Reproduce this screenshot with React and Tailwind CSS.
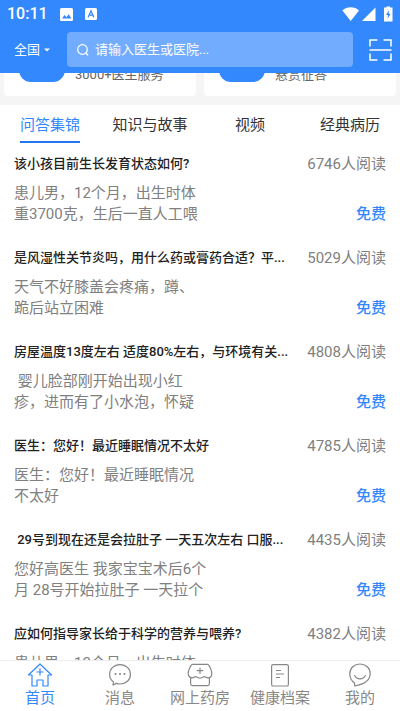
import { useState } from 'react'

const tabs = ['问答集锦', '知识与故事', '视频', '经典病历']

const services = [
  { id: 'doctor', label: '3000+医生服务' },
  { id: 'reward', label: '悬赏征答' },
]

const articles = [
  { id: 1, title: '该小孩目前生长发育状态如何?', reads: 6746, body: '患儿男，12个月，出生时体\n重3700克，生后一直人工喂' },
  { id: 2, title: '是风湿性关节炎吗，用什么药或膏药合适？平...', reads: 5029, body: '天气不好膝盖会疼痛，蹲、\n跪后站立困难' },
  { id: 3, title: '房屋温度13度左右 适度80%左右，与环境有关...', reads: 4808, body: ' 婴儿脸部刚开始出现小红\n疹，进而有了小水泡，怀疑' },
  { id: 4, title: '医生：您好！最近睡眠情况不太好', reads: 4785, body: '医生：您好！最近睡眠情况\n不太好' },
  { id: 5, title: ' 29号到现在还是会拉肚子 一天五次左右 口服...', reads: 4435, body: '您好高医生 我家宝宝术后6个\n月 28号开始拉肚子 一天拉个' },
  { id: 6, title: '应如何指导家长给于科学的营养与喂养?', reads: 4382, body: '患儿男，12个月，出生时体' },
]

function HomeIcon() {
  return (
    <svg width="26" height="24" viewBox="0 0 26 24" fill="none" stroke="currentColor" strokeWidth="1.2" strokeLinejoin="round">
      <path d="M13 1 L24.5 12 H21 V23 H16 V17 H10 V23 H5 V12 H1.5 Z" />
      <path d="M13 5.5 V12.5 M9.5 9 H16.5" />
    </svg>
  )
}

function MessageIcon() {
  return (
    <svg width="26" height="24" viewBox="0 0 26 24" fill="none" stroke="currentColor" strokeWidth="1.2" strokeLinejoin="round">
      <path d="M6.5 19 C3.8 17.2 2.6 14.5 2.6 11.6 C2.6 5.8 7 1.6 13 1.6 C19 1.6 23.4 5.8 23.4 11.4 C23.4 17 19 21 13 21 C11.6 21 10.4 20.8 9.3 20.4 L6 22 Z" />
      <g fill="currentColor" stroke="none">
        <circle cx="8.5" cy="11" r="1.1" />
        <circle cx="13" cy="11" r="1.1" />
        <circle cx="17.5" cy="11" r="1.1" />
      </g>
    </svg>
  )
}

function ShopIcon() {
  return (
    <svg width="26" height="24" viewBox="0 0 26 24" fill="none" stroke="currentColor" strokeWidth="1.2" strokeLinecap="round" strokeLinejoin="round">
      <path d="M5.4 1.4 H20.6 C22 1.4 24.8 7.2 24.8 10.4 C24.8 12.8 23.4 14.8 21 14.8 C19.4 14.8 18.2 13.6 17.2 13.6 C16 13.6 15 15.2 13 15.2 C11 15.2 10 13.6 8.8 13.6 C7.8 13.6 6.6 14.8 5 14.8 C2.6 14.8 1.2 12.8 1.2 10.4 C1.2 7.2 4 1.4 5.4 1.4 Z" />
      <path d="M3.6 14.6 V20.8 Q3.6 22.6 5.4 22.6 H20.6 Q22.4 22.6 22.4 20.8 V14.6" />
      <path d="M13 5 V10.4 M10.3 7.7 H15.7" />
    </svg>
  )
}

function RecordIcon() {
  return (
    <svg width="26" height="24" viewBox="0 0 26 24" fill="none" stroke="currentColor" strokeWidth="1.2">
      <rect x="4.6" y="1.6" width="16.8" height="21.4" rx="1.6" />
      <path d="M9 7.5 H14 M9 11 H17 M9 14.5 H13" />
    </svg>
  )
}

function MineIcon() {
  return (
    <svg width="26" height="24" viewBox="0 0 26 24" fill="none" stroke="currentColor" strokeWidth="1.2" strokeLinecap="round" strokeLinejoin="round">
      <path d="M7.6 23 V20 C4.6 18 2.8 14.6 2.8 11 C2.8 5 7.2 1 13 1 C18.8 1 23.2 5 23.2 10.6 C23.2 17 17 21.4 7.6 23 Z" />
      <path d="M7.6 12.6 C9.8 17 16.2 17 18.4 12.6" />
    </svg>
  )
}

const navItems = [
  { id: 'home', label: '首页', Icon: HomeIcon },
  { id: 'message', label: '消息', Icon: MessageIcon },
  { id: 'shop', label: '网上药房', Icon: ShopIcon },
  { id: 'record', label: '健康档案', Icon: RecordIcon },
  { id: 'mine', label: '我的', Icon: MineIcon },
]

function StatusBar() {
  return (
    <div className="flex h-7 items-center justify-between px-[7px]">
      <div className="flex items-center">
        <span className="text-base font-medium leading-5">10:11</span>
        <svg className="ml-3" width="13" height="13" viewBox="0 0 13 13">
          <rect width="13" height="13" rx="1.5" fill="#fff" />
          <path d="M2 10.5 L4.6 7 L6.4 9.2 L8.8 6.2 L11.4 10.5 Z" fill="#3388fd" />
        </svg>
        <svg className="ml-3" width="12" height="12" viewBox="0 0 12 12">
          <rect width="12" height="12" rx="1.5" fill="#fff" />
          <path d="M3.2 9.2 L6 2.8 L8.8 9.2 M4.2 7.2 H7.8" fill="none" stroke="#3388fd" strokeWidth="1.3" />
        </svg>
      </div>
      <svg width="51" height="16" viewBox="0 0 51 16" fill="#fff">
        <path d="M0.4 4.4 C4.8 0.2 12.6 0.2 17 4.4 L8.7 15 Z" />
        <path d="M33.5 1.5 V15 H20 Z" />
        <path d="M44.5 1.6 V0.5 H48 V1.6 H50.5 V15.4 H42 V1.6 Z" />
        <path d="M47 4 L44 9 H46 L45.6 12.8 L48.6 7.8 H46.6 Z" fill="#3388fd" />
      </svg>
    </div>
  )
}

export default function App() {
  const [activeTab, setActiveTab] = useState(tabs[0])
  const [activeNav, setActiveNav] = useState('home')
  const [keyword, setKeyword] = useState('')

  return (
    <div className="flex h-screen flex-col overflow-hidden bg-white font-[Roboto,'Noto_Sans_CJK_SC',sans-serif]">
      <header className="shrink-0 bg-[#3388fd] pb-1.5 text-white">
        <StatusBar />
        <div className="flex items-center pl-3.5 pr-2 pt-1">
          <button type="button" className="flex w-[53px] items-center gap-1 text-[13px] leading-5">
            全国
            <svg width="6" height="4" viewBox="0 0 6 4" fill="currentColor">
              <path d="M0 0.5 H6 L3 3.5 Z" />
            </svg>
          </button>
          <label className="flex h-[35px] min-w-0 flex-1 items-center gap-1.5 rounded bg-[#71acfe] pl-2.5">
            <svg width="12" height="12" viewBox="0 0 12 12" fill="none" stroke="#fff" strokeWidth="1.2" strokeLinecap="round">
              <circle cx="5.5" cy="5.5" r="4.8" />
              <path d="M8.8 9 L10.8 11" />
            </svg>
            <input
              className="min-w-0 flex-1 bg-transparent text-[13px] leading-5 outline-none placeholder:text-white"
              aria-label="搜索"
              placeholder="请输入医生或医院..."
              value={keyword}
              onChange={e => setKeyword(e.target.value)}
            />
          </label>
          <button type="button" aria-label="扫一扫" className="ml-4">
            <svg width="23" height="22" viewBox="0 0 23 22" fill="none" stroke="#fff" strokeWidth="1.5">
              <path d="M1 7.5 V1 H8.5 M14.5 1 H22 V7.5 M22 14.5 V21 H14.5 M8.5 21 H1 V14.5" />
              <path d="M0.5 11 H22.5" />
            </svg>
          </button>
        </div>
      </header>

      {/* service cards, scrolled half way under the header */}
      <section className="grid shrink-0 grid-cols-2 gap-2 bg-[#f5f5f5] px-1 pb-[9px]">
        {services.map(s => (
          <a key={s.id} href={`#${s.id}`} className="flex h-[23px] items-end gap-2.5 overflow-hidden rounded-b bg-white pl-[15px]">
            <span className="mb-3.5 h-[46px] w-[46px] shrink-0 rounded-xl bg-[#3388fd]" />
            <span className="mb-[11px] text-[13px] leading-5 text-[#666]">{s.label}</span>
          </a>
        ))}
      </section>

      <nav className="grid shrink-0 grid-cols-4">
        {tabs.map(tab => (
          <button
            key={tab}
            type="button"
            onClick={() => setActiveTab(tab)}
            className={`flex justify-center text-[15px] leading-5 ${tab === activeTab ? 'text-[#3388fd]' : 'text-[#333]'}`}
          >
            <span className={`border-b-2 pb-1.5 pt-2.5 ${tab === activeTab ? 'border-[#1f78f0]' : 'border-transparent'}`}>
              {tab}
            </span>
          </button>
        ))}
      </nav>

      <main className="min-h-0 flex-1 overflow-y-auto px-3.5 pt-[11px] [scrollbar-width:none]">
        <ul>
          {articles.map(a => (
            <li key={a.id} className="pb-[23px]">
              <div className="flex items-center justify-between gap-2">
                <h2 className="min-w-0 truncate whitespace-pre text-[13px] font-medium leading-5 text-[#222]">{a.title}</h2>
                <span className="shrink-0 text-[15px] leading-5 text-[#808080]">{a.reads}人阅读</span>
              </div>
              <div className="mt-[9px] flex items-end justify-between">
                <p className="h-[42px] whitespace-pre text-[15px] leading-[21px] text-[#808080]">{a.body}</p>
                <span className="text-[15px] font-medium leading-[21px] text-[#3388fd]">免费</span>
              </div>
            </li>
          ))}
        </ul>
      </main>

      <footer className="grid shrink-0 grid-cols-5 border-t border-[#eee] bg-white py-0.5">
        {navItems.map(({ id, label, Icon }) => (
          <button
            key={id}
            type="button"
            onClick={() => setActiveNav(id)}
            className={`flex flex-col items-center whitespace-nowrap text-[15px] leading-[22px] ${id === activeNav ? 'text-[#3388fd]' : 'text-[#888]'}`}
          >
            <Icon />
            {label}
          </button>
        ))}
      </footer>
    </div>
  )
}
